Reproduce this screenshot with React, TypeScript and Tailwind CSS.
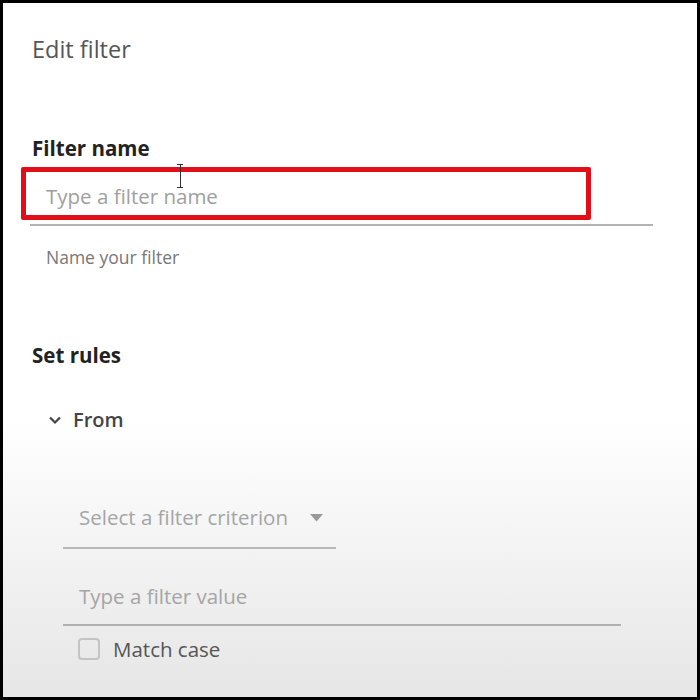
import React from "react";

const font = { fontFamily: '"Open Sans", "Noto Sans", sans-serif' };

const ChevronDown = () => (
  <svg width="14" height="10" viewBox="0 0 14 10" className="text-[#444]">
    <path d="M2 2.5 L7 7.5 L12 2.5" fill="none" stroke="currentColor" strokeWidth="2.2" />
  </svg>
);

export default function App() {
  return (
    <div
      style={font}
      className="w-[700px] h-[700px] border-[3px] border-black bg-[linear-gradient(to_bottom,#ffffff_0%,#ffffff_60%,#e6e6e6_100%)] overflow-hidden"
    >
      <div className="pl-[29px]">
        <h1 className="mt-[31px] h-[30px] leading-[30px] text-[23.5px] text-[#555] font-normal">
          Edit filter
        </h1>

        <h2 className="mt-[70px] h-[28px] leading-[28px] text-[20.5px] font-bold text-[#222]">
          Filter name
        </h2>

        <div className="relative -ml-[2px] w-[623px] h-[64px] border-b-2 border-[#b3b3b3] flex items-center pt-[6px]">
          <span className="pl-[16px] text-[20.5px] text-[#a0a0a0] leading-none">
            Type a filter name
          </span>
          {/* highlight annotation */}
          <div className="absolute left-[-9px] top-[5px] w-[570px] h-[53px] border-[5px] border-[#e10d18] rounded-[2px]" />
          {/* text cursor */}
          <div className="absolute left-[147px] top-[2px] flex flex-col items-center">
            <div className="w-[6px] h-[1px] bg-[#333]" />
            <div className="w-[1px] h-[22px] bg-[#333]" />
            <div className="w-[6px] h-[1px] bg-[#333]" />
          </div>
        </div>

        <p className="mt-[19px] pl-[14px] h-[24px] leading-[24px] text-[17.5px] text-[#777]">
          Name your filter
        </p>

        <h2 className="mt-[72px] h-[28px] leading-[28px] text-[20.5px] font-bold text-[#222]">
          Set rules
        </h2>

        <div className="mt-[37px] flex items-center h-[28px] pl-[16px] gap-[11px]">
          <ChevronDown />
          <span className="text-[20px] font-semibold text-[#444] leading-none">From</span>
        </div>

        <div className="ml-[31px] mt-[60px]">
          <div className="w-[273px] h-[55px] border-b-2 border-[#b8b8b8] flex items-center pl-[16px] gap-[22px] pb-[6px]">
            <span className="text-[20.5px] text-[#a5a5a5] leading-none">Select a filter criterion</span>
            <svg width="13" height="8" viewBox="0 0 13 8">
              <path d="M0 0 H13 L6.5 7.5 Z" fill="#9a9a9a" />
            </svg>
          </div>

          <div className="mt-[20px] w-[558px] h-[57px] border-b-2 border-[#b0b0b0] flex items-center pl-[16px]">
            <span className="text-[20.5px] text-[#a5a5a5] leading-none">Type a filter value</span>
          </div>

          <label className="mt-[12px] flex items-center pl-[15px] gap-[13px]">
            <span className="w-[22px] h-[22px] rounded-[4px] border-2 border-[#c4c4c4] bg-transparent" />
            <span className="text-[20.5px] text-[#555] leading-none">Match case</span>
          </label>
        </div>
      </div>
    </div>
  );
}
